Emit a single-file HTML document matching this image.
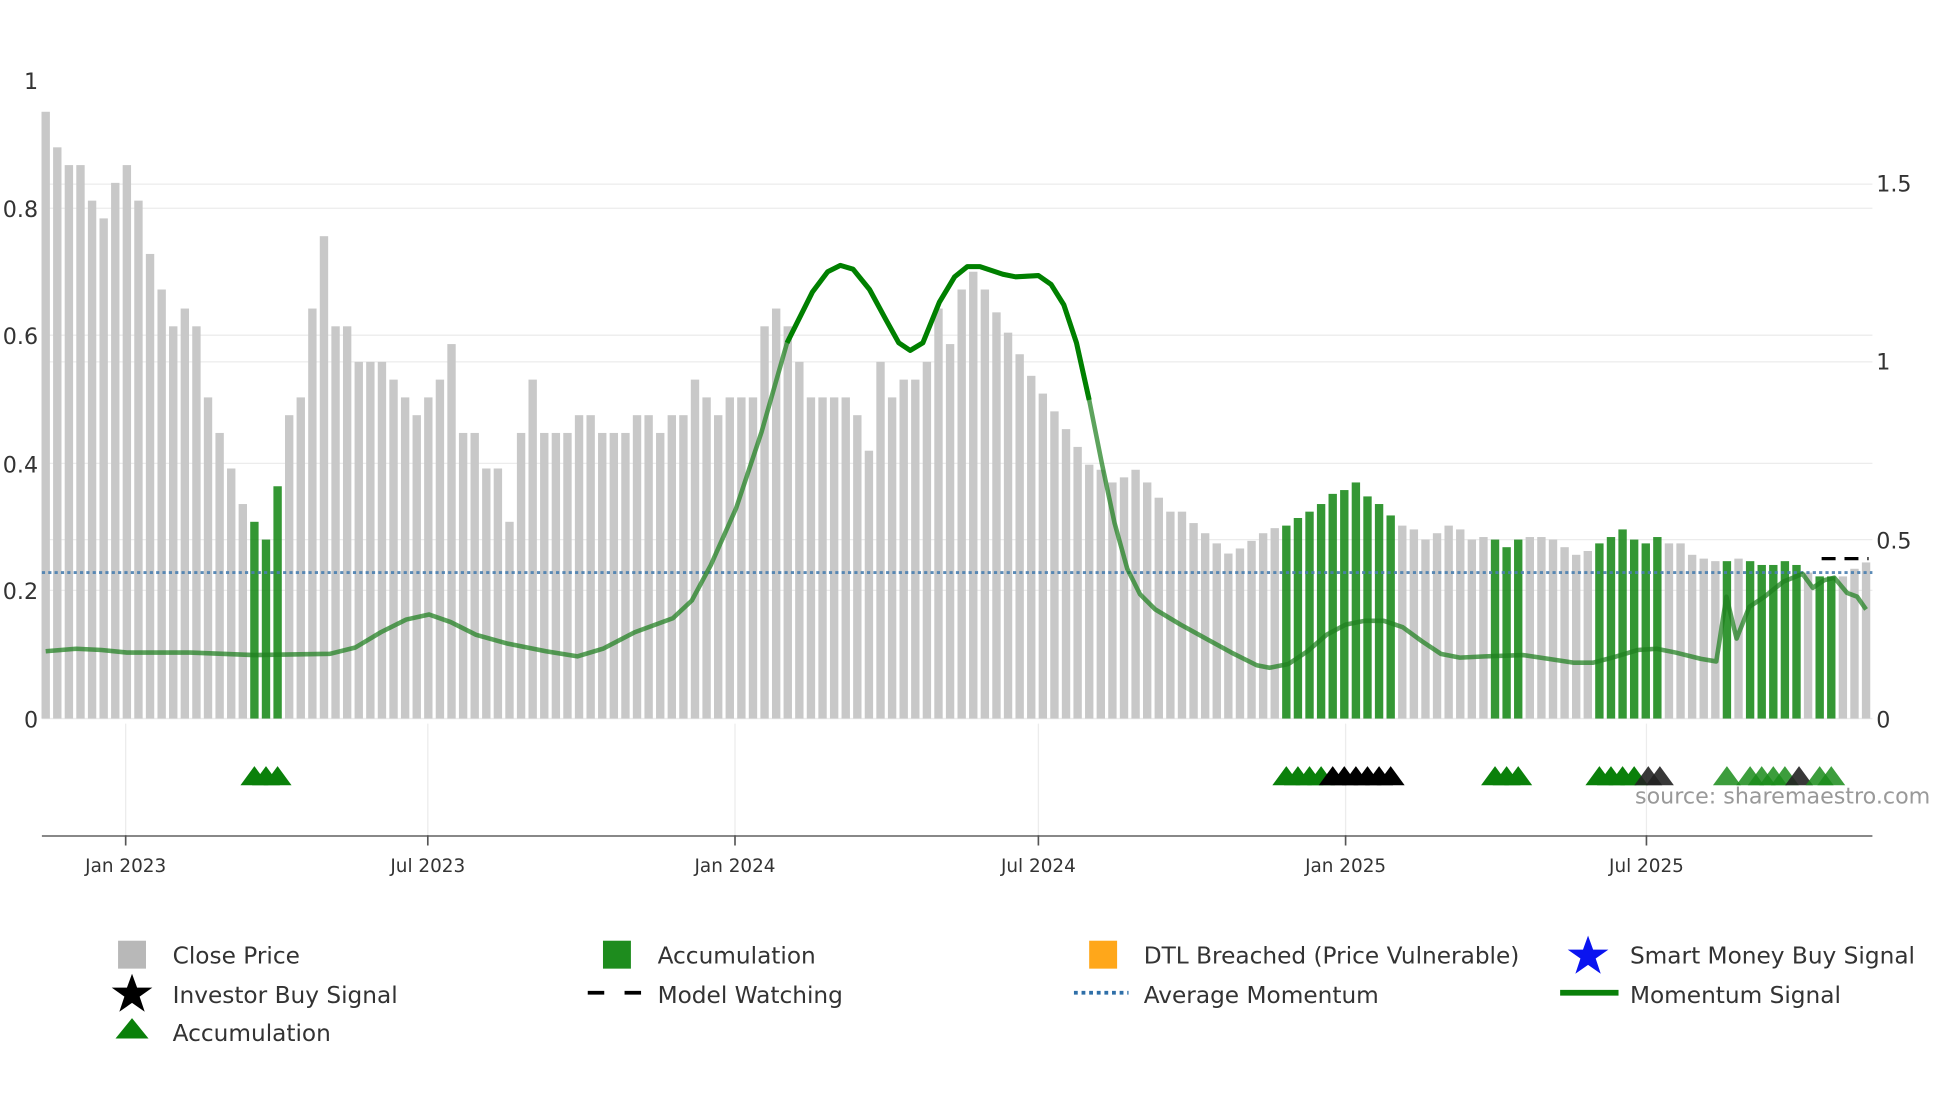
<!DOCTYPE html>
<html><head><meta charset="utf-8"><style>
html,body{margin:0;padding:0;background:#fff;width:1960px;height:1102px;overflow:hidden}
svg{display:block}
text{font-family:"DejaVu Sans","Liberation Sans",sans-serif;fill:#333}
</style></head><body>
<svg id="s" width="1960" height="1102" viewBox="0 0 1544 868" xmlns="http://www.w3.org/2000/svg">
<g stroke="#ececec" stroke-width="1">
<line x1="33" x2="1475" y1="145" y2="145"/><line x1="33" x2="1475" y1="164" y2="164"/>
<line x1="33" x2="1475" y1="264" y2="264"/><line x1="33" x2="1475" y1="285" y2="285"/>
<line x1="33" x2="1475" y1="365" y2="365"/><line x1="33" x2="1475" y1="425" y2="425"/>
<line x1="33" x2="1475" y1="465" y2="465"/><line x1="33" x2="1475" y1="566" y2="566"/>
<line x1="99" x2="99" y1="570" y2="658"/><line x1="337" x2="337" y1="570" y2="658"/>
<line x1="579" x2="579" y1="570" y2="658"/><line x1="818" x2="818" y1="570" y2="658"/>
<line x1="1060" x2="1060" y1="570" y2="658"/><line x1="1297" x2="1297" y1="570" y2="658"/>
</g>
<g id="bars"></g>
<line x1="33" x2="1475" y1="451" y2="451" stroke="#4a7fb0" stroke-width="2.2" stroke-dasharray="2.5 2.5" opacity="0.9"/>
<line x1="1435" x2="1472" y1="440" y2="440" stroke="#000" stroke-width="2.5" stroke-dasharray="11 7"/>
<path id="mom" fill="none" stroke="#1f7f1f" stroke-width="3.6" opacity="0.72" stroke-linejoin="round"/>
<path id="mom2" fill="none" stroke="#008000" stroke-width="4" stroke-linejoin="round"/>
<g id="tris"></g>
<text x="1288" y="633" style="fill:#999;font-size:17.5px">source: sharemaestro.com</text>
<line x1="33" x2="1475" y1="658.5" y2="658.5" stroke="#888" stroke-width="1.5"/>
<g stroke="#555" stroke-width="1.3">
<line x1="99" x2="99" y1="658" y2="666"/><line x1="337" x2="337" y1="658" y2="666"/>
<line x1="579" x2="579" y1="658" y2="666"/><line x1="818" x2="818" y1="658" y2="666"/>
<line x1="1060" x2="1060" y1="658" y2="666"/><line x1="1297" x2="1297" y1="658" y2="666"/>
</g>
<g style="font-size:14.5px" text-anchor="middle">
<text x="99" y="687">Jan 2023</text><text x="337" y="687">Jul 2023</text>
<text x="579" y="687">Jan 2024</text><text x="818" y="687">Jul 2024</text>
<text x="1060" y="687">Jan 2025</text><text x="1297" y="687">Jul 2025</text>
</g>
<g style="font-size:17.5px" text-anchor="end">
<text x="30" y="70">1</text><text x="30" y="171">0.8</text><text x="30" y="271">0.6</text>
<text x="30" y="372">0.4</text><text x="30" y="472">0.2</text><text x="30" y="573">0</text>
</g>
<g style="font-size:17.5px">
<text x="1478" y="151">1.5</text><text x="1478" y="291">1</text><text x="1478" y="432">0.5</text><text x="1478" y="573">0</text>
</g>
<g style="font-size:18.3px">
<rect x="93" y="741" width="22" height="22" fill="#b8b8b8"/><text x="136" y="759">Close Price</text>
<rect x="475" y="741" width="22" height="22" fill="#1e8c1e"/><text x="518" y="759">Accumulation</text>
<rect x="858" y="741" width="22" height="22" fill="#ffa71a"/><text x="901" y="759">DTL Breached (Price Vulnerable)</text>
<polygon fill="#0a14f0" points="1251,737 1255,748 1267,748 1257,755 1261,767 1251,760 1241,767 1245,755 1235,748 1247,748"/>
<text x="1284" y="759">Smart Money Buy Signal</text>
<polygon fill="#000" points="104,767 108,778 120,778 110,785 114,797 104,790 94,797 98,785 88,778 100,778"/>
<text x="136" y="790">Investor Buy Signal</text>
<line x1="463" x2="506" y1="782" y2="782" stroke="#000" stroke-width="3" stroke-dasharray="13 16"/>
<text x="518" y="790">Model Watching</text>
<line x1="846" x2="889" y1="782" y2="782" stroke="#2f6fa8" stroke-width="3" stroke-dasharray="3 3"/>
<text x="901" y="790">Average Momentum</text>
<line x1="1229" x2="1275" y1="782" y2="782" stroke="#0a800a" stroke-width="4.5"/>
<text x="1284" y="790">Momentum Signal</text>
<polygon fill="#0a800a" points="91,818 104,802 117,818"/>
<text x="136" y="820">Accumulation</text>
</g>
</svg>
<script>
var tops=[88,116,130,130,158,172,144,130,158,200,228,257,243,257,313,341,369,397,
411,425,383,
327,313,243,186,257,257,285,285,285,299,313,327,313,299,271,341,341,369,369,411,341,299,341,341,341,327,327,341,341,341,327,327,341,327,327,299,313,327,313,313,313,257,243,257,285,313,313,313,313,327,355,285,313,299,299,285,243,271,228,214,228,246,262,279,296,310,324,338,352,366,370,380,376,370,380,392,403,403,412,420,428,436,432,426,420,416,
414,408,403,397,389,386,380,391,397,406,
414,417,425,420,414,417,425,423,
425,431,425,
423,423,425,431,437,434,
428,423,417,425,428,423,
428,428,437,440,442,
442,440,442,445,445,442,445,451,454,454,454,448,443];
var green={};
function rng(a,b){for(var i=a;i<=b;i++)green[i]=1;}
rng(18,20);rng(107,116);rng(125,127);rng(134,139);green[145]=1;rng(147,151);rng(153,154);
var n=tops.length,x0=36,x1=1470,st=(x1-x0)/(n-1),h='';
function X(i){return x0+i*st;}
for(var i=0;i<n;i++){var x=X(i);h+='<rect x="'+(x-3.3).toFixed(2)+'" y="'+tops[i]+'" width="6.6" height="'+(566-tops[i])+'" fill="'+(green[i]?'#1e8c1e':'#c8c8c8')+'" opacity="'+(green[i]?0.9:1)+'"/>';}
document.getElementById('bars').innerHTML=h;
var P=[[36,513],[60,511],[80,512],[100,514],[150,514],[200,516],[260,515],[280,510],[300,498],[320,488],[338,484],[355,490],[375,500],[400,507],[430,513],[455,517],[475,511],[500,498],[530,487],[545,473],[560,445],[580,400],[600,340],[620,270],[640,230],[652,214],[662,209],[672,212],[685,228],[698,252],[708,270],[717,276],[727,270],[740,238],[752,218],[762,210],[772,210],[790,216],[800,218],[818,217],[828,224],[838,240],[848,270],[858,315],[868,365],[878,412],[888,448],[898,468],[910,480],[930,492],[950,503],[970,514],[990,524],[1000,526],[1015,523],[1030,513],[1045,500],[1060,492],[1075,489],[1090,489],[1105,494],[1120,505],[1135,515],[1150,518],[1170,517],[1200,516],[1220,519],[1240,522],[1255,522],[1270,518],[1290,512],[1305,511],[1320,514],[1340,519],[1352,521],[1360,470],[1368,503],[1378,478],[1390,470],[1405,458],[1420,452],[1428,463],[1437,457],[1445,455],[1455,467],[1463,470],[1470,480]];
var d='',d2='';
P.forEach(function(p,k){d+=(k?'L':'M')+p[0]+','+p[1];});
var f=1;P.forEach(function(p){if(p[0]>=615&&p[0]<=866){d2+=(f?'M':'L')+p[0]+','+p[1];f=0;}});
document.getElementById('mom').setAttribute('d',d);
document.getElementById('mom2').setAttribute('d',d2);
function tri(cx,c,op){return '<polygon points="'+(cx-11)+',618.5 '+cx+',603.5 '+(cx+11)+',618.5" fill="'+c+'" opacity="'+op+'"/>';}
var t='';
[18,19,20].forEach(function(i){t+=tri(X(i),'#0a800a',1);});
[107,108,109,110].forEach(function(i){t+=tri(X(i),'#0a800a',1);});
[111,112,113,114,115,116].forEach(function(i){t+=tri(X(i),'#000',1);});
[125,126,127].forEach(function(i){t+=tri(X(i),'#0a800a',1);});
[134,135,136,137].forEach(function(i){t+=tri(X(i),'#0a800a',1);});
[138,139].forEach(function(i){t+=tri(X(i)+2,'#222',0.9);});
[145,147,148,149,150].forEach(function(i){t+=tri(X(i),'#1a8c1a',0.85);});
t+=tri(X(151)+2,'#222',0.9);
[153,154].forEach(function(i){t+=tri(X(i),'#1a8c1a',0.85);});
document.getElementById('tris').innerHTML=t;
</script>
</body></html>
